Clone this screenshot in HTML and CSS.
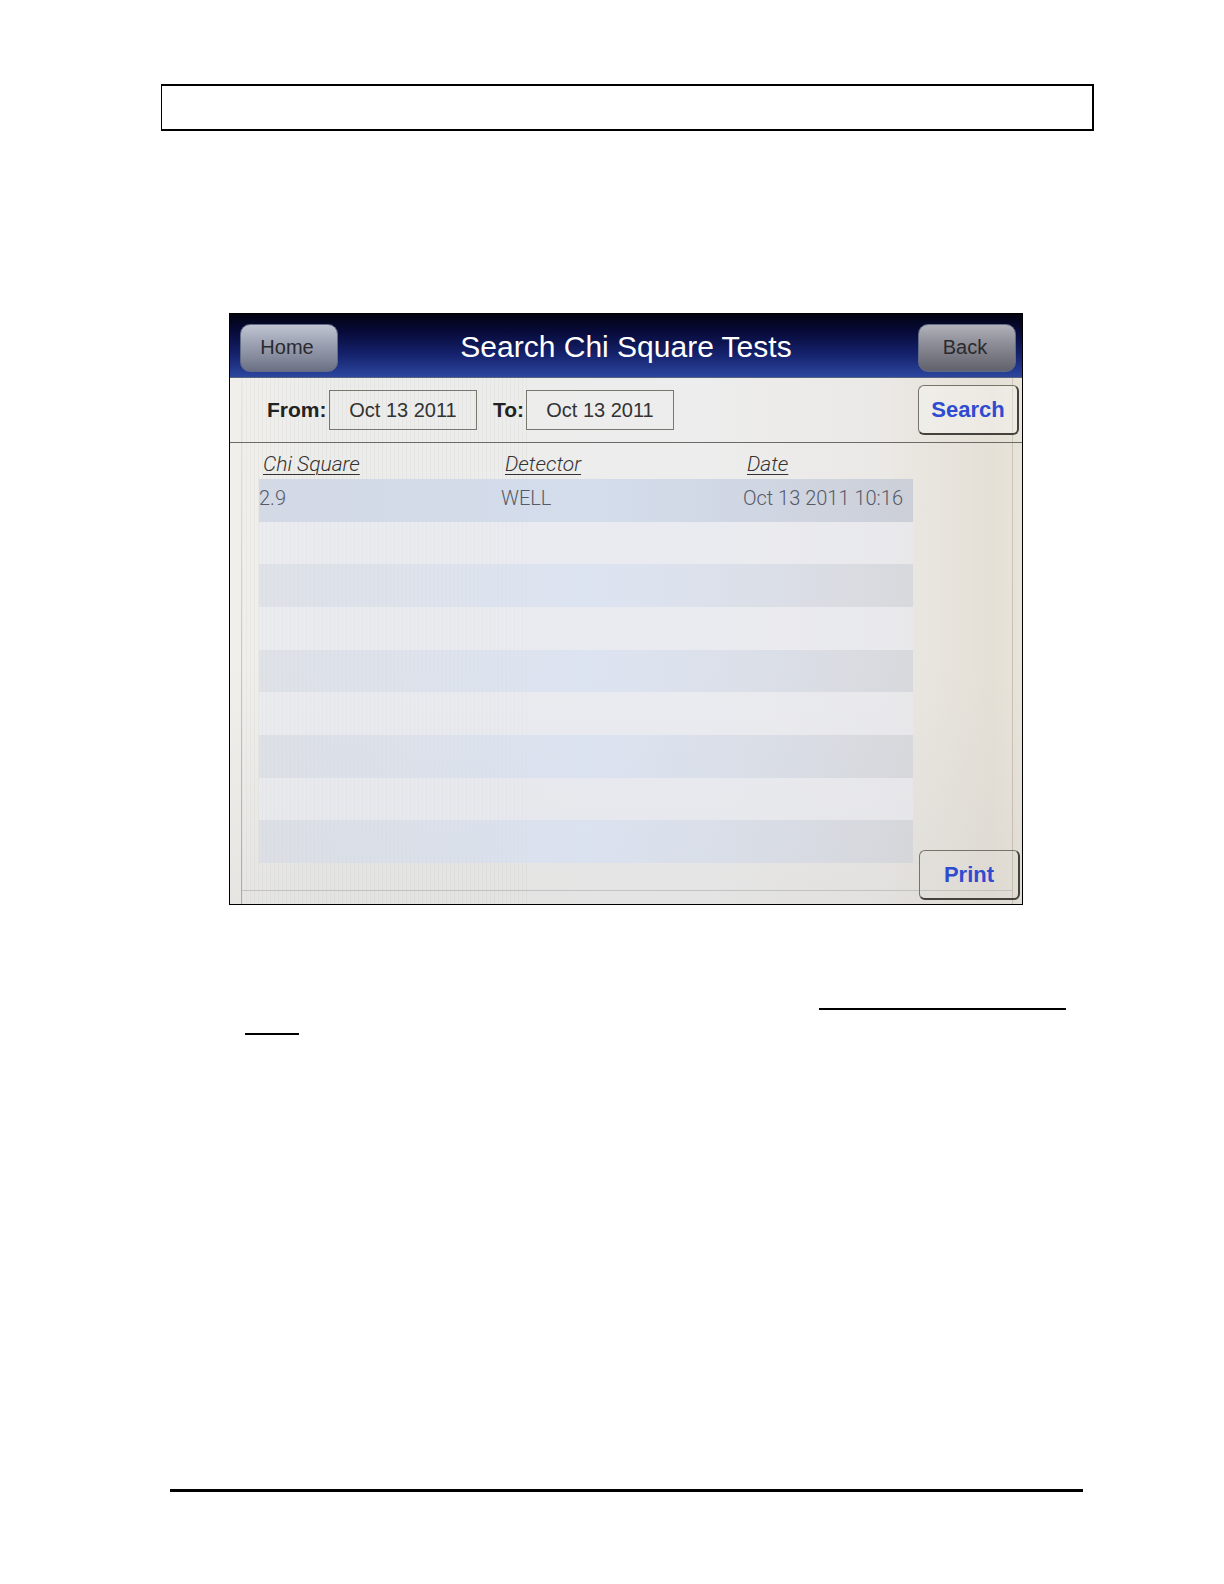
FILE: index.html
```
<!DOCTYPE html>
<html lang="en">
<head>
  <meta charset="UTF-8">
  <meta name="viewport" content="width=device-width, initial-scale=1.0">
  <title>Search Chi Square Tests</title>
  <link rel="stylesheet" href="styles.css">
</head>
<body>

  <div class="page">
    <div class="page-header"></div>

    <main class="screen">
      <header class="title-bar">
        <button type="button" class="nav-button">Home</button>
        <h1>Search Chi Square Tests</h1>
        <button type="button" class="nav-button back">Back</button>
      </header>

      <form class="filters">
        <label for="fromDate">From:</label>
        <input type="text" id="fromDate" value="Oct 13 2011">
        <label for="toDate" class="to-label">To:</label>
        <input type="text" id="toDate" value="Oct 13 2011">
        <button type="button" class="action-button">Search</button>
      </form>

      <div class="results">
        <table>
          <thead>
            <tr>
              <th>Chi Square</th>
              <th>Detector</th>
              <th>Date</th>
            </tr>
          </thead>
          <tbody>
            <tr><td>2.9</td><td>WELL</td><td>Oct 13 2011 10:16</td></tr>
            <tr><td></td><td></td><td></td></tr>
            <tr><td></td><td></td><td></td></tr>
            <tr><td></td><td></td><td></td></tr>
            <tr><td></td><td></td><td></td></tr>
            <tr><td></td><td></td><td></td></tr>
            <tr><td></td><td></td><td></td></tr>
            <tr><td></td><td></td><td></td></tr>
            <tr><td></td><td></td><td></td></tr>
          </tbody>
        </table>
        <div class="side">
          <button type="button" class="action-button">Print</button>
        </div>
      </div>
    </main>

    <div class="rules">
      <hr class="rule long">
      <hr class="rule short">
    </div>

    <footer class="page-footer"></footer>
  </div>

</body>
</html>
```
FILE: styles.css
```
/* General Styles */
* {
  box-sizing: border-box;
}

body {
  font-family: "Liberation Sans", Arial, sans-serif;
  margin: 0;
  background: #fff;
  color: #222;
}

.page {
  display: flex;
  flex-direction: column;
  min-height: 100vh;
  padding: 84px 130px 92px 161px;
}

.page-header {
  height: 47px;
  border: 2px solid #000;
  border-left-width: 1px;
}

/* Device screen */
.screen {
  margin: 182px 71px 0 68px;
  border: 1px solid #000;
  background:
    linear-gradient(rgba(150, 145, 135, 0), rgba(150, 145, 135, 0.7)) 11px 100% / 1px 100% no-repeat,
    linear-gradient(#cdc8bc, #c4beb2) calc(100% - 9px) 0 / 1px 100% no-repeat,
    linear-gradient(#c2c2c0, #c2c2c0) 12px calc(100% - 13px) / calc(100% - 21px) 1px no-repeat,
    repeating-linear-gradient(90deg, rgba(120, 120, 110, 0.06) 0 1px, rgba(120, 120, 110, 0) 1px 4px) 12px 64px / 36% 100% no-repeat,
    linear-gradient(rgba(200, 200, 200, 0) 60%, rgba(200, 200, 200, 0.25)),
    linear-gradient(90deg, #f0efeb, #ececeb 12%, #ededed 60%, #ebe9e6 82%, #e5e0d6 96%, #e9e4da);
}

.title-bar {
  display: flex;
  align-items: center;
  justify-content: space-between;
  height: 64px;
  padding: 4px 6px 0 10px;
  border-bottom: 1px solid #59627c;
  background: linear-gradient(#02020f, #080c3c 30%, #142069 62%, #2b469f);
}

h1 {
  margin: 0 4px 2px 0;
  font-size: 30px;
  font-weight: 400;
  color: #fff;
}

button {
  font-family: inherit;
  cursor: pointer;
}

.nav-button {
  width: 98px;
  height: 48px;
  padding: 0 4px 0 0;
  border: 1px solid #626b87;
  border-radius: 10px;
  background: linear-gradient(#c0c4d2, #a1a6b7 35%, #858a9c 70%, #6a7084);
  color: #2a2a2e;
  font-size: 20px;
}

.nav-button.back {
  background: linear-gradient(#b2b2ba, #92929c 35%, #777781 70%, #62626e);
}

.filters {
  display: flex;
  align-items: center;
  height: 65px;
  padding: 0 3px 0 37px;
  border-bottom: 1px solid #6b6a67;
}

.filters label {
  width: 62px;
  font-size: 21px;
  font-weight: 700;
}

.filters .to-label {
  width: 33px;
  margin-left: 16px;
}

.filters input {
  width: 148px;
  height: 40px;
  padding: 0;
  border: 1px solid #77766f;
  background: transparent;
  color: #333;
  font-family: inherit;
  font-size: 20px;
  text-align: center;
}

.action-button {
  width: 101px;
  height: 50px;
  padding: 0;
  border: 1px solid #77736b;
  border-right: 2px solid #45423d;
  border-bottom: 2px solid #45423d;
  border-radius: 6px;
  background: transparent;
  color: #2f4bd0;
  font-size: 22px;
  font-weight: 700;
}

.filters .action-button {
  margin-left: auto;
  background: rgba(255, 255, 255, 0.3);
}

/* Results */
.results {
  display: flex;
  padding-left: 29px;
}

table {
  flex: 1;
  height: 420px;
  margin-bottom: 41px;
  border-collapse: collapse;
  table-layout: fixed;
  font-family: Roboto, "Liberation Sans", sans-serif;
  font-weight: 300;
}

th,
td {
  padding: 0;
  text-align: left;
}

th {
  width: 37%;
  height: 36px;
  padding: 6px 0 0 4px;
  color: #333;
  font-size: 21px;
  font-style: italic;
  font-weight: 300;
  text-decoration: underline;
  text-decoration-thickness: 1px;
  text-underline-offset: 3px;
}

th:last-child {
  width: 26%;
}

td {
  height: 42px;
  padding-bottom: 4px;
  color: #555a68;
  font-size: 20px;
  line-height: 24px;
  white-space: nowrap;
}

tbody tr {
  background: rgba(232, 234, 243, 0.5);
}

tbody tr:nth-child(odd) {
  background: linear-gradient(90deg, rgba(212, 217, 228, 0.6), rgba(214, 224, 243, 0.7) 50%, rgba(204, 207, 216, 0.6));
}

tbody tr:first-child {
  background: linear-gradient(90deg, rgba(205, 212, 228, 0.8), rgba(205, 217, 236, 0.8) 50%, rgba(194, 199, 212, 0.75));
}

.side {
  display: flex;
  align-items: flex-end;
  justify-content: flex-end;
  width: 109px;
  padding: 0 2px 4px 0;
}

/* Rules under the screen */
.rules {
  display: flex;
  flex-direction: column;
  gap: 23px;
  margin: 103px 28px 0 84px;
}

.rule {
  height: 2px;
  margin: 0;
  border: 0;
  background: #000;
}

.rule.long {
  width: 247px;
  align-self: flex-end;
}

.rule.short {
  width: 54px;
}

.page-footer {
  margin: auto 11px 0 9px;
  border-top: 3px solid #000;
}
```
